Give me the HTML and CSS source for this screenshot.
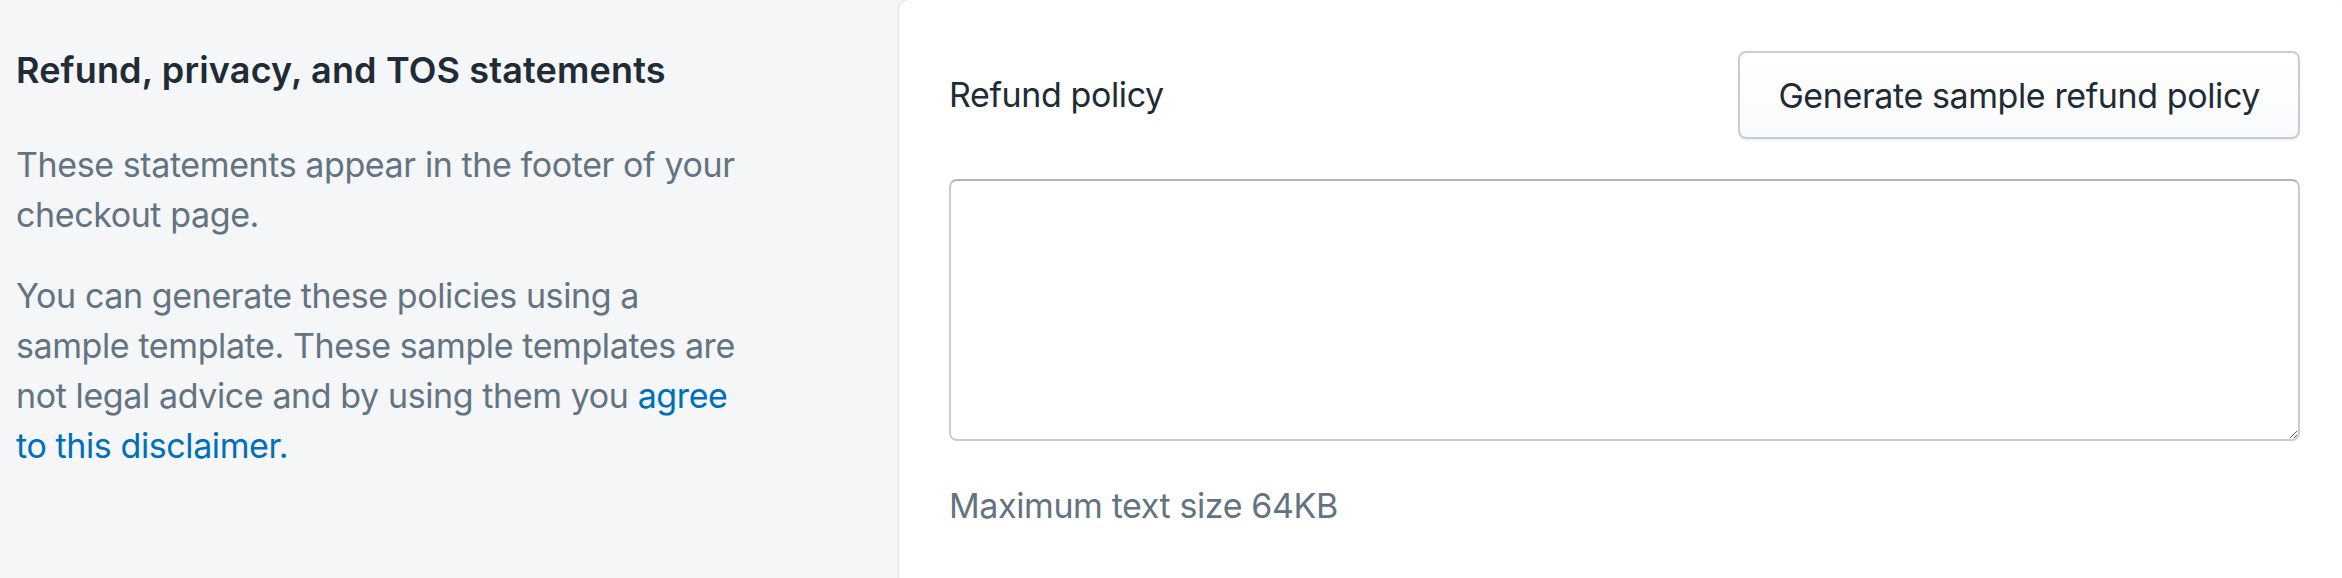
FILE: index.html
```html
<!DOCTYPE html>
<html lang="en">
<head>
<meta charset="utf-8">
<title>Refund, privacy, and TOS statements</title>
<link rel="stylesheet" href="styles.css">
</head>
<body>
<div class="layout">
  <section class="annotation">
    <h2 class="annotation-title">Refund, privacy, and TOS statements</h2>
    <p class="annotation-text">These statements appear in the footer of your checkout page.</p>
    <p class="annotation-text">You can generate these policies using a sample template. These sample templates are not legal advice and by using them you <a class="link" href="#">agree to this disclaimer.</a></p>
  </section>
  <section class="card">
    <div class="field-header">
      <label class="field-label" for="refund">Refund policy</label>
      <button class="btn" type="button">Generate sample refund policy</button>
    </div>
    <textarea id="refund" class="textarea"></textarea>
    <p class="help-text">Maximum text size 64KB</p>
  </section>
</div>
</body>
</html>
```

FILE: styles.css
```css
html, body {
  margin: 0;
  padding: 0;
}

body {
  background: #f4f6f8;
  font-family: Inter, "Noto Sans", "Liberation Sans", sans-serif;
  color: #212b36;
  overflow: hidden;
  height: 578px;
}

.layout {
  display: flex;
  align-items: flex-start;
  padding-left: 16px;
}

.annotation {
  width: 745px;
  margin-right: 138px;
  padding-top: 45px;
  flex: none;
}

.annotation-title {
  margin: 0;
  font-size: 36px;
  line-height: 50px;
  font-weight: 600;
  letter-spacing: 0.15px;
  color: #212b36;
}

.annotation-text {
  margin: 31px 0 0;
  font-size: 34px;
  line-height: 50px;
  letter-spacing: -0.4px;
  color: #637381;
}

.annotation-title + .annotation-text {
  margin-top: 45px;
}

.link {
  color: #006fbb;
  text-decoration: none;
}

.card {
  flex: none;
  width: 1451px;
  min-height: 640px;
  box-sizing: border-box;
  background: #ffffff;
  border-radius: 10px;
  padding: 51px 50px 50px;
  box-shadow: 0 0 0 1px rgba(63, 63, 68, 0.05), 0 1px 3px 0 rgba(63, 63, 68, 0.15);
}

.field-header {
  display: flex;
  align-items: center;
  justify-content: space-between;
}

.field-label {
  font-size: 34px;
  line-height: 50px;
  letter-spacing: -0.4px;
  color: #212b36;
}

.btn {
  height: 88px;
  padding: 0 38px;
  box-sizing: border-box;
  font-family: inherit;
  font-size: 34px;
  letter-spacing: -0.4px;
  color: #212b36;
  background: linear-gradient(180deg, #ffffff, #f9fafb);
  border: 2px solid #c4cdd5;
  border-radius: 8px;
  box-shadow: 0 2px 0 0 rgba(22, 29, 37, 0.05);
}

.textarea {
  display: block;
  width: 100%;
  height: 262px;
  margin-top: 40px;
  box-sizing: border-box;
  border: 2px solid #c4cdd5;
  border-top-color: #aeb4b9;
  border-radius: 8px;
  background: #ffffff;
  resize: vertical;
  font-family: inherit;
  font-size: 34px;
}

.help-text {
  margin: 40px 0 0;
  font-size: 34px;
  line-height: 50px;
  letter-spacing: -0.4px;
  color: #637381;
}
```
